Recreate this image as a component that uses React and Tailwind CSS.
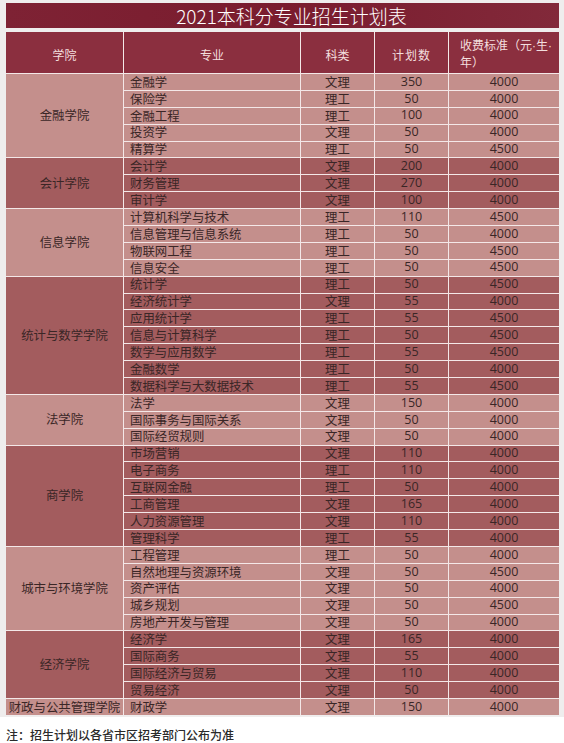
import React from "react";

const groups = [
  {
    name: "金融学院",
    rows: [
      ["金融学", "文理", "350", "4000"],
      ["保险学", "理工", "50", "4000"],
      ["金融工程", "理工", "100", "4000"],
      ["投资学", "文理", "50", "4000"],
      ["精算学", "理工", "50", "4500"],
    ],
  },
  {
    name: "会计学院",
    rows: [
      ["会计学", "文理", "200", "4000"],
      ["财务管理", "文理", "270", "4000"],
      ["审计学", "文理", "100", "4000"],
    ],
  },
  {
    name: "信息学院",
    rows: [
      ["计算机科学与技术", "理工", "110", "4500"],
      ["信息管理与信息系统", "理工", "50", "4000"],
      ["物联网工程", "理工", "50", "4500"],
      ["信息安全", "理工", "50", "4500"],
    ],
  },
  {
    name: "统计与数学学院",
    rows: [
      ["统计学", "理工", "50", "4500"],
      ["经济统计学", "文理", "55", "4000"],
      ["应用统计学", "理工", "55", "4500"],
      ["信息与计算科学", "理工", "50", "4500"],
      ["数学与应用数学", "理工", "55", "4500"],
      ["金融数学", "理工", "50", "4000"],
      ["数据科学与大数据技术", "理工", "55", "4500"],
    ],
  },
  {
    name: "法学院",
    rows: [
      ["法学", "文理", "150", "4000"],
      ["国际事务与国际关系", "文理", "50", "4000"],
      ["国际经贸规则", "文理", "50", "4000"],
    ],
  },
  {
    name: "商学院",
    rows: [
      ["市场营销", "文理", "110", "4000"],
      ["电子商务", "理工", "110", "4000"],
      ["互联网金融", "理工", "50", "4000"],
      ["工商管理", "文理", "165", "4000"],
      ["人力资源管理", "文理", "110", "4000"],
      ["管理科学", "理工", "55", "4000"],
    ],
  },
  {
    name: "城市与环境学院",
    rows: [
      ["工程管理", "理工", "50", "4000"],
      ["自然地理与资源环境", "文理", "50", "4500"],
      ["资产评估", "文理", "50", "4000"],
      ["城乡规划", "文理", "50", "4500"],
      ["房地产开发与管理", "文理", "50", "4000"],
    ],
  },
  {
    name: "经济学院",
    rows: [
      ["经济学", "文理", "165", "4000"],
      ["国际商务", "文理", "55", "4000"],
      ["国际经济与贸易", "文理", "110", "4000"],
      ["贸易经济", "文理", "50", "4000"],
    ],
  },
  {
    name: "财政与公共管理学院",
    rows: [["财政学", "文理", "150", "4000"]],
  },
];

const spans = {
  1: "row-span-1",
  3: "row-span-3",
  4: "row-span-4",
  5: "row-span-5",
  6: "row-span-6",
  7: "row-span-7",
};

const head = "bg-[#8b2f3f] flex items-center justify-center pt-[4px] text-[12px] text-[#f3dede]";
const num = { fontFamily: '"Open Sans", "Noto Sans CJK SC", sans-serif' };
const dot = { fontFamily: '"Liberation Sans", sans-serif' };

const App = () => {
  return (
    <div
      className="w-[564px] min-h-[743px] bg-white text-[#3a2626]"
      style={{ fontFamily: '"Noto Sans CJK SC", "Noto Sans", sans-serif' }}
    >
      <div className="bg-[#efeded] px-[6px] pt-[3px] pb-[2px] w-[564px]">
        {/* title */}
        <div className="h-[25px] w-[553px] bg-gradient-to-r from-[#7e2234] via-[#7a1c2e] to-[#82293a] flex items-center justify-center pl-[18px] text-white text-[19px] font-light leading-none">
          2021本科分专业招生计划表
        </div>

        <div className="mt-[4px] w-[553px] grid grid-cols-[117px_176px_73px_73px_110px] grid-rows-[41px_repeat(38,15.9px)] gap-px bg-[#f4e8e8]">
          {/* header */}
          <div className={head}>学院</div>
          <div className={head}>专业</div>
          <div className={head}>科类</div>
          <div className={`${head} tracking-[1px]`}>计划数</div>
          <div className="bg-[#8b2f3f] flex items-center pl-[11px] pr-[2px] pt-[2px] text-[12px] leading-[16px] text-[#f3dede]">
            <span>
              收费标准（元<span style={dot}>·</span>生<span style={dot}>·</span>年）
            </span>
          </div>

          {groups.map((g, gi) => {
            const bg = gi % 2 === 0 ? "bg-[#c48f8c]" : "bg-[#a35c5e]";
            return (
              <React.Fragment key={g.name}>
                <div
                  className={`${spans[g.rows.length]} ${bg} flex items-center justify-center text-[12.4px] whitespace-nowrap`}
                >
                  {g.name}
                </div>
                {g.rows.map((r, ri) => (
                  <React.Fragment key={ri}>
                    <div className={`col-start-2 ${bg} flex items-center pl-[6px] text-[12.4px] leading-none whitespace-nowrap`}>
                      {r[0]}
                    </div>
                    <div className={`${bg} flex items-center justify-center text-[12.4px] leading-none`}>
                      {r[1]}
                    </div>
                    <div className={`${bg} flex items-center justify-center text-[12.5px] leading-none`} style={num}>
                      {r[2]}
                    </div>
                    <div className={`${bg} flex items-center justify-center text-[12.5px] leading-none`} style={num}>
                      {r[3]}
                    </div>
                  </React.Fragment>
                ))}
              </React.Fragment>
            );
          })}
        </div>
      </div>

      <div className="px-[6px] pt-[9px] text-[12px] font-medium text-[#2a2a2a]">
        注：招生计划以各省市区招考部门公布为准
      </div>
    </div>
  );
};

export default App;
